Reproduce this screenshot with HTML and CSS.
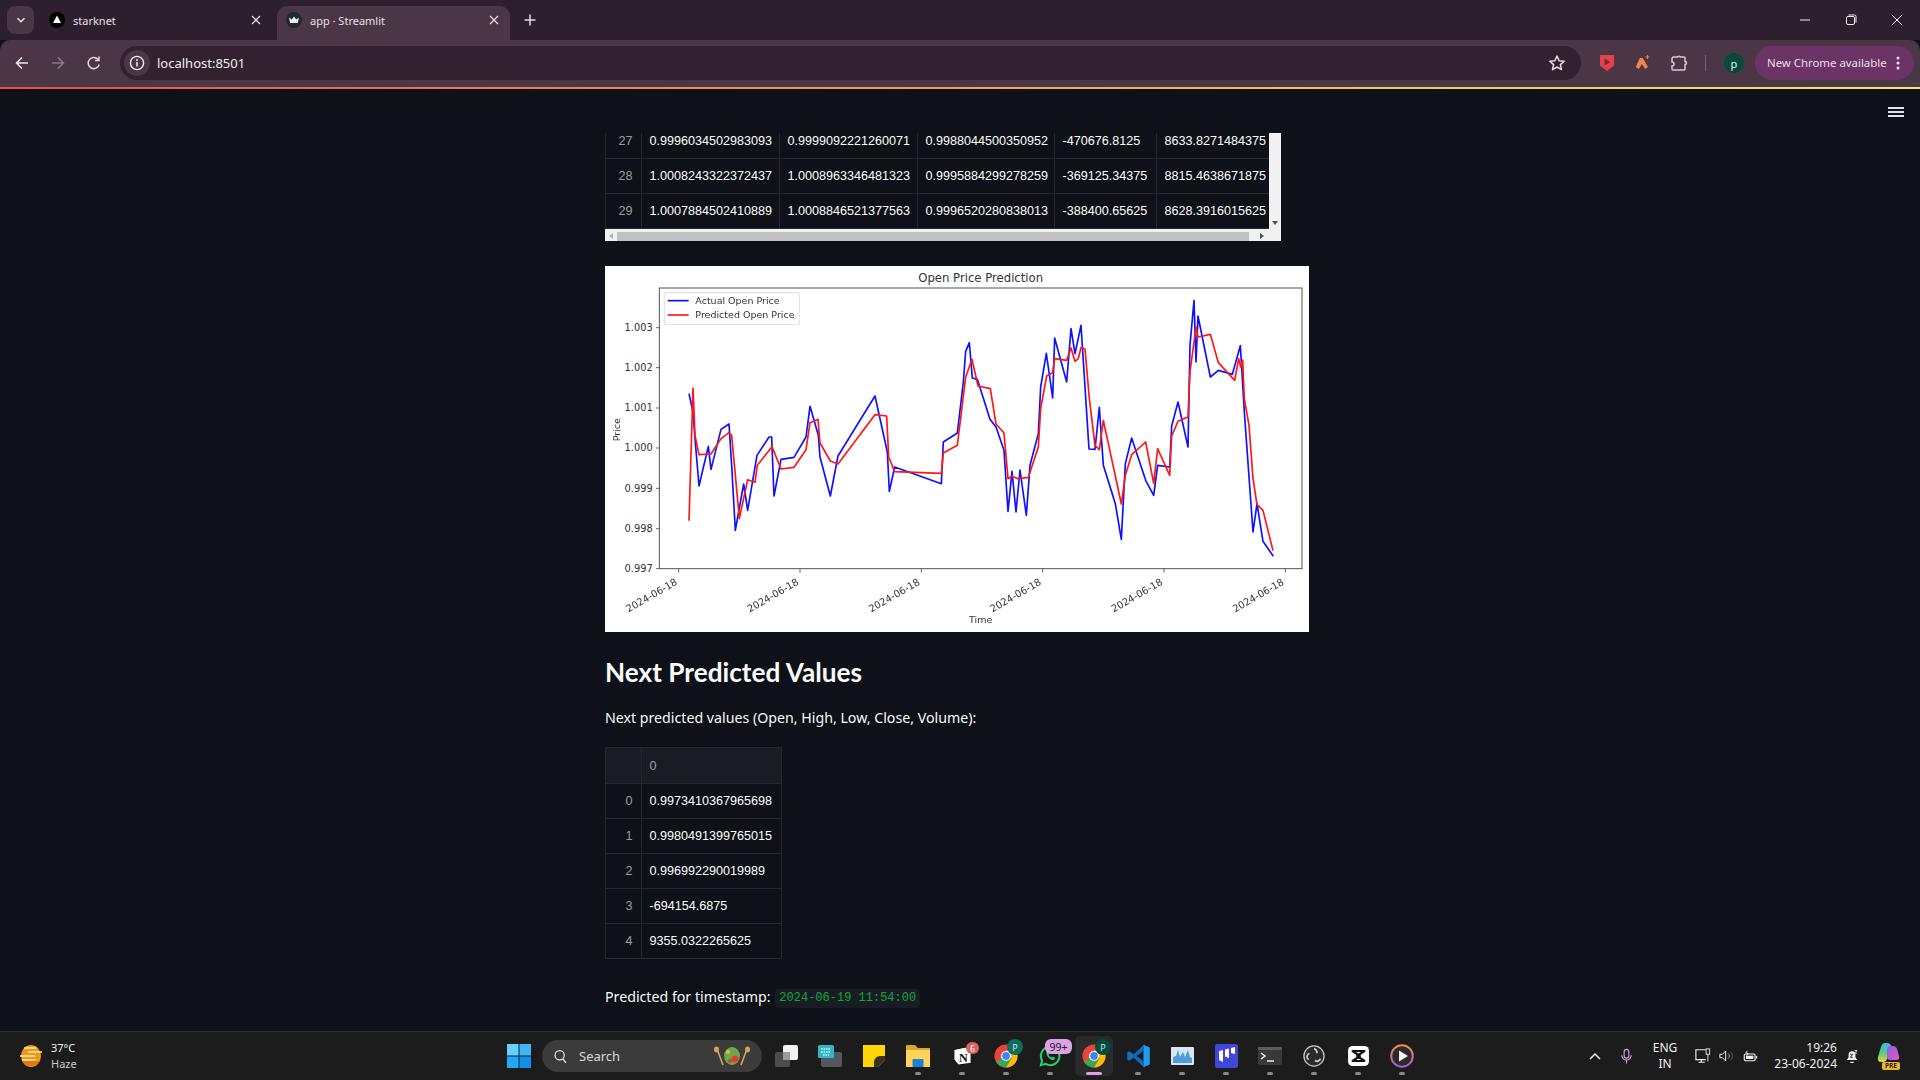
FILE: index.html
```html
<!DOCTYPE html>
<html lang="en">
<head>
<meta charset="utf-8">
<title>app · Streamlit</title>
<link rel="stylesheet" href="styles.css">
</head>
<body>
<div class="window">
  <header class="tabstrip">
    <button class="tabsearch"><svg width="12" height="12" viewBox="0 0 12 12"><path d="M2.500 4.200 6 7.700l3.500-3.500" fill="none" stroke="#e8dfe6" stroke-width="1.600"/></svg></button>
    <div class="tab tab-idle">
      <svg class="favicon" width="16" height="16" viewBox="0 0 16 16"><circle cx="8" cy="8" r="8" fill="#000"/><path d="M8 3.600 12 11H4z" fill="#fff"/></svg>
      <span class="tabtitle">starknet</span>
      <svg class="tabclose" width="12" height="12" viewBox="0 0 12 12"><path d="M2 2l8 8M10 2l-8 8" stroke="#e6dde4" stroke-width="1.300"/></svg>
    </div>
    <div class="tab tab-active">
      <svg class="favicon" width="16" height="16" viewBox="0 0 16 16"><circle cx="8" cy="8" r="8" fill="#232730"/><path d="M3 5.500 5.800 7.500 8 4.500l2.200 3L13 5.500 11.800 11H4.200z" fill="#f2f0f2"/></svg>
      <span class="tabtitle">app · Streamlit</span>
      <svg class="tabclose" width="12" height="12" viewBox="0 0 12 12"><path d="M2 2l8 8M10 2l-8 8" stroke="#e6dde4" stroke-width="1.300"/></svg>
    </div>
    <svg class="newtab" width="14" height="14" viewBox="0 0 14 14"><path d="M7 1.500v11M1.500 7h11" stroke="#e6dde4" stroke-width="1.500"/></svg>
    <div class="wincontrols">
      <svg width="12" height="12" viewBox="0 0 12 12"><path d="M1 6h10" stroke="#f0f0f0" stroke-width="1"/></svg>
      <svg width="12" height="12" viewBox="0 0 12 12"><rect x="1.500" y="2.500" width="8" height="8" rx="1.500" fill="none" stroke="#f0f0f0"/><path d="M3.500 1h6a1.500 1.500 0 0 1 1.500 1.500v6" fill="none" stroke="#f0f0f0"/></svg>
      <svg width="12" height="12" viewBox="0 0 12 12"><path d="M.8.8l10.400 10.400M11.200.8.800 11.200" stroke="#f0f0f0"/></svg>
    </div>
  </header>

  <nav class="toolbar">
    <svg class="navicon" width="16" height="16" viewBox="0 0 16 16"><path d="M14 8H2.500M8 2.500 2.500 8 8 13.500" fill="none" stroke="#eee5ec" stroke-width="1.600"/></svg>
    <svg class="navicon" width="16" height="16" viewBox="0 0 16 16"><path d="M2 8h11.500M8 2.500 13.500 8 8 13.500" fill="none" stroke="#8b7886" stroke-width="1.600"/></svg>
    <svg class="navicon" width="16" height="16" viewBox="0 0 16 16"><path d="M13.200 9.500A5.600 5.600 0 1 1 12 4.300M13 1.500v4H9" fill="none" stroke="#e3dae1" stroke-width="1.500"/></svg>
    <div class="omnibox">
      <span class="siteinfo"><svg width="16" height="16" viewBox="0 0 16 16"><circle cx="8" cy="8" r="6.600" fill="none" stroke="#efe8ee" stroke-width="1.400"/><path d="M8 7v4.500" stroke="#efe8ee" stroke-width="1.600"/><circle cx="8" cy="4.900" r="1" fill="#efe8ee"/></svg></span>
      <span class="url">localhost:8501</span>
      <svg class="star" width="18" height="18" viewBox="0 0 18 18"><path d="m9 2 2.100 4.700 5.100.5-3.800 3.400 1.100 5L9 13l-4.500 2.600 1.100-5-3.800-3.400 5.100-.5z" fill="none" stroke="#e6dde4" stroke-width="1.500" stroke-linejoin="round"/></svg>
    </div>
    <svg class="ext ext-pocket" width="14" height="16" viewBox="0 0 14 16"><path d="M0 0h14v10.500L7 16l-7-5.500z" fill="#e8404a"/><path d="M4.500 3.500 10.500 7l-6 3.500z" fill="#6e2b3c"/></svg>
    <svg class="ext ext-spark" width="18" height="18" viewBox="0 0 18 18"><path d="M6.800 4h3L15 13l-3 2-3-5-3.200 5-3-2z" fill="#f5824a"/><path d="M14.500 1v4M12.500 3h4" stroke="#f5824a" stroke-width="1"/></svg>
    <svg class="ext ext-puzzle" width="18" height="18" viewBox="0 0 18 18"><path d="M4 3h3.500a2 2 0 0 1 3 0H14a1 1 0 0 1 1 1v3.500a1.500 1.500 0 0 1 0 3V15a1 1 0 0 1-1 1H3a1 1 0 0 1-1-1v-3a2 2 0 0 0 0-4V5a2 2 0 0 1 2-2z" fill="none" stroke="#d8c9d4" stroke-width="1.500"/></svg>
    <span class="tooldivider"></span>
    <span class="avatar">p</span>
    <div class="updatechip"><span class="chiptext">New Chrome available</span><svg width="4" height="14" viewBox="0 0 4 14"><circle cx="2" cy="2" r="1.500" fill="#eadfe8"/><circle cx="2" cy="7" r="1.500" fill="#eadfe8"/><circle cx="2" cy="12" r="1.500" fill="#eadfe8"/></svg></div>
  </nav>
  <div class="accentline"></div>

  <main class="content">
    <div class="hamburger"><span></span><span></span><span></span></div>
    <div class="column">
      <div class="scrollframe">
        <div class="scrollbody">
          <table class="dtable wide">
            <colgroup><col class="c-idx"><col class="c-a"><col class="c-b"><col class="c-c"><col class="c-d"><col class="c-e"></colgroup>
            <tr><th>27</th><td>0.9996034502983093</td><td>0.9999092221260071</td><td>0.9988044500350952</td><td>-470676.8125</td><td>8633.8271484375</td></tr>
            <tr><th>28</th><td>1.0008243322372437</td><td>1.0008963346481323</td><td>0.9995884299278259</td><td>-369125.34375</td><td>8815.4638671875</td></tr>
            <tr><th>29</th><td>1.0007884502410889</td><td>1.0008846521377563</td><td>0.9996520280838013</td><td>-388400.65625</td><td>8628.3916015625</td></tr>
          </table>
          <div class="hscroll"><i class="arrow-l"></i><b class="thumb"></b><i class="arrow-r"></i></div>
        </div>
        <div class="vscroll"><i class="arrow-d"></i></div>
      </div>

      <svg class="chart" viewBox="15 2 2112 1098" preserveAspectRatio="none" role="img" aria-label="Open Price Prediction">
        <rect x="15" y="0" width="2112" height="1100" fill="#fff"/>
        <text class="c-title" x="1142" y="50" text-anchor="middle">Open Price Prediction</text>
        <polyline class="blue" points="267,385 279,440 285,520 297,662 325,543 333,612 363,492 387,476 395,600 406,795 431,656 443,735 471,570 507,515 515,515 522,692 543,582 582,576 618,515 630,423 655,510 660,575 691,692 714,572 825,392 862,560 868,678 884,605 1024,655 1030,530 1072,503 1090,350 1097,258 1108,232 1117,338 1132,342 1170,462 1188,485 1212,555 1224,738 1236,618 1248,740 1260,614 1279,750 1290,600 1315,505 1322,365 1339,264 1358,398 1364,218 1400,350 1413,190 1425,265 1443,180 1467,551 1485,552 1498,426 1510,600 1546,715 1564,822 1576,595 1595,518 1637,645 1661,690 1673,600 1709,605 1715,482 1734,410 1764,545 1770,240 1782,105 1788,290 1794,152 1831,335 1855,315 1897,327 1921,241 1933,440 1959,800 1971,715 1989,828 2020,873"/>
        <polyline class="red" points="267,766 279,368 285,510 297,568 333,566 363,520 387,502 395,510 418,760 443,643 465,651 472,600 516,544 543,611 582,606 618,553 630,472 654,462 660,533 691,587 714,596 825,448 860,452 866,575 884,619 1024,624 1030,563 1072,540 1097,335 1116,282 1134,362 1171,370 1188,476 1212,503 1224,640 1236,633 1254,640 1285,636 1315,545 1322,430 1340,332 1358,322 1364,280 1400,285 1413,248 1425,288 1435,280 1443,247 1455,251 1468,400 1485,540 1498,553 1510,465 1564,716 1576,630 1595,568 1637,530 1661,654 1673,550 1709,630 1715,512 1734,468 1764,455 1770,320 1788,185 1794,215 1831,207 1855,292 1904,345 1916,280 1922,305 1928,284 1933,400 1947,480 1959,640 1971,718 1989,735 2019,856"/>
        <rect class="frame" x="178" y="68" width="1928" height="842"/>
        <path class="tick" d="M168 187h10M168 307h10M168 428h10M168 548h10M168 669h10M168 790h10M168 910h10M236 910v12M600 910v12M964 910v12M1328 910v12M1692 910v12M2056 910v12"/>
        <g class="c-tick" text-anchor="end">
          <text x="158" y="197">1.003</text><text x="158" y="317">1.002</text><text x="158" y="438">1.001</text><text x="158" y="558">1.000</text><text x="158" y="679">0.999</text><text x="158" y="800">0.998</text><text x="158" y="920">0.997</text>
          <text x="234" y="956" transform="rotate(-30 234 956)">2024-06-18</text>
          <text x="598" y="956" transform="rotate(-30 598 956)">2024-06-18</text>
          <text x="962" y="956" transform="rotate(-30 962 956)">2024-06-18</text>
          <text x="1326" y="956" transform="rotate(-30 1326 956)">2024-06-18</text>
          <text x="1690" y="956" transform="rotate(-30 1690 956)">2024-06-18</text>
          <text x="2054" y="956" transform="rotate(-30 2054 956)">2024-06-18</text>
        </g>
        <text class="c-label" x="1142" y="1074" text-anchor="middle">Time</text>
        <text class="c-label" x="60" y="493" text-anchor="middle" transform="rotate(-90 60 493)">Price</text>
        <rect class="legend" x="193" y="82" width="405" height="96" rx="5"/>
        <path class="blue" d="M203 106h63"/>
        <path class="red" d="M203 149h63"/>
        <text class="c-label" x="286" y="116">Actual Open Price</text>
        <text class="c-label" x="286" y="159">Predicted Open Price</text>
      </svg>

      <h2 class="heading">Next Predicted Values</h2>
      <p class="para">Next predicted values (Open, High, Low, Close, Volume):</p>
      <table class="dtable narrow">
        <colgroup><col class="c-idx"><col class="c-val"></colgroup>
        <thead><tr><th></th><th class="colhead">0</th></tr></thead>
        <tbody>
          <tr><th>0</th><td>0.9973410367965698</td></tr>
          <tr><th>1</th><td>0.9980491399765015</td></tr>
          <tr><th>2</th><td>0.996992290019989</td></tr>
          <tr><th>3</th><td>-694154.6875</td></tr>
          <tr><th>4</th><td>9355.0322265625</td></tr>
        </tbody>
      </table>
      <p class="para stamp">Predicted for timestamp: <code class="chip">2024-06-19 11:54:00</code></p>
    </div>
  </main>

  <footer class="taskbar">
    <div class="weather">
      <svg width="24" height="22" viewBox="0 0 24 22"><ellipse cx="12" cy="11" rx="10" ry="11" fill="#f39a0c"/><path d="M12 21a10 10 0 0 0 9-5H3a10 10 0 0 0 9 5z" fill="#e8760c"/><path d="M5 3h12M9 7h14M1 11h15M3 15h14" stroke="#f6e7c8" stroke-width="1.300"/></svg>
      <div class="weathertext"><span>37°C</span><span class="dim">Haze</span></div>
    </div>
    <svg class="startlogo" width="24" height="24" viewBox="0 0 24 24"><rect width="11.500" height="11.500" fill="#66d0fb"/><rect x="12.500" width="11.500" height="11.500" fill="#3db7f8"/><rect y="12.500" width="11.500" height="11.500" fill="#22a7f5"/><rect x="12.500" y="12.500" width="11.500" height="11.500" fill="#0c92ee"/></svg>
    <div class="searchbox">
      <svg width="15" height="15" viewBox="0 0 16 18"><circle cx="7" cy="7.500" r="5.500" fill="none" stroke="#e5e5e5" stroke-width="1.500"/><path d="m11 12 3.500 4.500" stroke="#e5e5e5" stroke-width="1.500"/></svg>
      <span class="searchtext">Search</span>
      <svg class="salad" width="40" height="20" viewBox="0 0 40 20"><path d="M5 3l6 16M35 3l-6 16" stroke="#d8a05c" stroke-width="1.600"/><ellipse cx="4.500" cy="3.500" rx="2.500" ry="3" fill="#d8a05c"/><ellipse cx="35.500" cy="3.500" rx="2.500" ry="3" fill="#d8a05c"/><ellipse cx="20" cy="10" rx="8" ry="9" fill="#6aa84f"/><circle cx="23" cy="13" r="3.500" fill="#d9402f"/><circle cx="16" cy="6" r="2.200" fill="#e7b23c"/><circle cx="18" cy="15" r="2" fill="#d9402f"/></svg>
    </div>
    <div class="apps">
      <div class="app">
        <svg width="23" height="22" viewBox="0 0 23 22"><rect x="0" y="7" width="15" height="15" rx="2" fill="#4c4c4c"/><rect x="8" y="0" width="15" height="15" rx="2" fill="#f2f2f2"/><rect x="8" y="7" width="7" height="8" fill="#9b9b9b"/></svg>
      </div>
      <div class="app">
        <svg width="24" height="22" viewBox="0 0 24 22"><rect x="3" y="7" width="21" height="15" rx="2" fill="#55585b"/><rect x="0" y="0" width="16" height="13" rx="1.500" fill="#31b7c9"/><path d="M3 4h10M3 7h10M5 10h6" stroke="#dff6f9" stroke-width="1.400" stroke-dasharray="1.500 1"/></svg>
      </div>
      <div class="app">
        <svg width="22" height="22" viewBox="0 0 22 22"><path d="M0 0h22v15l-7 7H0z" fill="#ffd400"/><path d="M22 11v4l-7 7h-4v-5a6 6 0 0 1 6-6z" fill="#3a3320"/></svg>
      </div>
      <div class="app has-dot">
        <svg width="24" height="22" viewBox="0 0 24 22"><path d="M0 1a1 1 0 0 1 1-1h8l3 3h12v19H0z" fill="#e0a526"/><rect x="0" y="5" width="24" height="17" rx="1" fill="#ffd35c"/><rect x="6.500" y="14" width="11" height="8" rx="1" fill="#1a82d2"/></svg>
      </div>
      <div class="app has-dot">
        <svg width="21" height="20" viewBox="0 0 24 23"><path d="M2 4l14-3 6 4v15l-15 2-5-6z" fill="#fff" stroke="#111" stroke-width="1.400"/><text class="notion" x="13" y="18" text-anchor="middle">N</text></svg>
        <span class="badge badge-red">6</span>
      </div>
      <div class="app has-dot">
        <svg width="24" height="24" viewBox="0 0 26 26"><circle cx="13" cy="13" r="12.500" fill="#e8453a"/><path d="M13 13 2.200 19.300A12.500 12.500 0 0 0 13 25.500l6-10z" fill="#34a853"/><path d="M13 7h11A12.500 12.500 0 0 1 13 25.500l6-10z" fill="#fbbc05"/><circle cx="13" cy="13" r="5.500" fill="#fff"/><circle cx="13" cy="13" r="4.200" fill="#3f85f4"/></svg>
        <span class="badge badge-profile badge-lite">P</span>
      </div>
      <div class="app has-dot">
        <svg width="24" height="22" viewBox="0 0 24 24"><path d="M12 2a10 10 0 0 0-8.600 15L2 22l5.200-1.400A10 10 0 1 0 12 2z" fill="none" stroke="#25d366" stroke-width="2.200"/><path d="M8 7.500c0 5 3.500 8.500 8.500 9l1-2.500-3-1.500-1 1c-1.500-.5-2.500-1.500-3-3l1-1-1.500-3z" fill="#25d366"/></svg>
        <span class="badge badge-lilac">99+</span>
      </div>
      <div class="app app-active">
        <svg width="24" height="24" viewBox="0 0 26 26"><circle cx="13" cy="13" r="12.500" fill="#e8453a"/><path d="M13 13 2.200 19.300A12.500 12.500 0 0 0 13 25.500l6-10z" fill="#34a853"/><path d="M13 7h11A12.500 12.500 0 0 1 13 25.500l6-10z" fill="#fbbc05"/><circle cx="13" cy="13" r="5.500" fill="#fff"/><circle cx="13" cy="13" r="4.200" fill="#3f85f4"/></svg>
        <span class="badge badge-profile">P</span>
      </div>
      <div class="app has-dot">
        <svg width="25" height="24" viewBox="0 0 100 100"><path d="M71 3 30 44 12 30 3 35v30l9 5 18-14 41 41z" fill="#0a6fbd"/><path d="M71 28 41 50l30 22z" fill="#1c1c1c"/><path d="M71 3l26 12v70L71 97z" fill="#1f9cf0"/></svg>
      </div>
      <div class="app has-dot">
        <svg width="23" height="18" viewBox="0 0 23 18"><rect width="23" height="18" rx="1" fill="#d9e6ef"/><path d="M2 16V10l3-1 2-6 2 7 3-5 2 5 3-7 2 7 2 1v5z" fill="#4e9dd8"/></svg>
      </div>
      <div class="app has-dot">
        <svg width="23" height="24" viewBox="0 0 23 24"><rect width="23" height="24" rx="2" fill="#3f46d9"/><path d="M4 7l4-1v12l-4-2zM10 5.500l4-1V14l-4-1.500zM16 4l4-1v7l-4-1z" fill="#fff"/></svg>
      </div>
      <div class="app has-dot">
        <svg width="24" height="18" viewBox="0 0 24 18"><rect width="24" height="18" rx="2" fill="#38393a"/><rect width="24" height="3" rx="1" fill="#5b5b5c"/><path d="M3 6l4 3-4 3" fill="none" stroke="#eee" stroke-width="1.500"/><path d="M9 14h7" stroke="#eee" stroke-width="1.500"/></svg>
      </div>
      <div class="app has-dot">
        <svg width="22" height="22" viewBox="0 0 24 24"><circle cx="12" cy="12" r="11" fill="#2a2a2a" stroke="#c9c9c9" stroke-width="1.400"/><path d="M12 4a4 4 0 0 1 3 5M19 15a4 4 0 0 1-6 2M6 16a4 4 0 0 1 1-7" fill="none" stroke="#c9c9c9" stroke-width="2"/></svg>
      </div>
      <div class="app has-dot">
        <svg width="21" height="20" viewBox="0 0 23 22"><rect width="23" height="22" rx="5" fill="#fff"/><path d="M5 5.500h13l-8 5.500 8 5.500H5l8-5.500z" fill="none" stroke="#111" stroke-width="2.400" stroke-linejoin="round"/></svg>
      </div>
      <div class="app has-dot">
        <svg width="24" height="24" viewBox="0 0 24 24"><defs><linearGradient id="ring" x1="0" y1="0" x2="0" y2="1"><stop offset="0" stop-color="#f28b4a"/><stop offset="1" stop-color="#a85ad8"/></linearGradient></defs><circle cx="12" cy="12" r="10.800" fill="#2a2a2a" stroke="url(#ring)" stroke-width="2"/><path d="M9 6.500 18 12l-9 5.500z" fill="#f2f2f2"/></svg>
      </div>
    </div>
    <div class="tray">
      <svg width="12" height="8" viewBox="0 0 12 8"><path d="M1 7l5-5 5 5" fill="none" stroke="#eee" stroke-width="1.500"/></svg>
      <svg class="mic" width="11" height="17" viewBox="0 0 14 20"><rect x="4" y="1" width="6" height="11" rx="3" fill="none" stroke="#d29ade" stroke-width="1.500"/><path d="M1 8.500a6 6 0 0 0 12 0M7 15v4" fill="none" stroke="#d29ade" stroke-width="1.500"/></svg>
      <div class="lang"><span>ENG</span><span>IN</span></div>
      <svg class="net" width="16" height="16" viewBox="0 0 18 18"><path d="M12 2H1v11h11M4 16h7M7 13v3" fill="none" stroke="#f0f0f0" stroke-width="1.300"/><rect x="12.500" y="1" width="4" height="6" fill="none" stroke="#f0f0f0"/><path d="M14.500 7v8" stroke="#f0f0f0"/></svg>
      <svg class="vol" width="15" height="12" viewBox="0 0 18 14"><path d="M1 5h3l4-4v12l-4-4H1z" fill="none" stroke="#eee" stroke-width="1.200"/><path d="M11 4a4 4 0 0 1 0 6" fill="none" stroke="#bbb"/><path d="M14 2a7 7 0 0 1 0 10" fill="none" stroke="#666"/></svg>
      <svg class="batt" width="15" height="13" viewBox="0 0 18 14"><rect x="1.500" y="4" width="13" height="8" rx="1.500" fill="none" stroke="#f0f0f0" stroke-width="1.300"/><rect x="3.500" y="6" width="9" height="4" fill="#f0f0f0"/><rect x="15.500" y="6.500" width="1.500" height="3" fill="#f0f0f0"/><path d="M5 0 3.500 3H6L4.500 6" stroke="#f0f0f0" fill="none"/></svg>
      <div class="clock"><span>19:26</span><span>23-06-2024</span></div>
      <svg class="bell" width="12" height="15" viewBox="0 0 14 16"><path d="M7 2a4 4 0 0 0-4 4v3l-2 3h12l-2-3V6a4 4 0 0 0-4-4zM5 14h4v1.500H5z" fill="#f0f0f0"/><path d="M5 5.500h3L5 9h3" fill="none" stroke="#1c1c1c"/><path d="M10 1h3l-3 3h3" fill="none" stroke="#f0f0f0"/></svg>
      <div class="copilot">
        <svg width="23" height="20" viewBox="0 0 23 20"><defs><linearGradient id="copl" x1="0" y1="0" x2="0" y2="1"><stop offset="0" stop-color="#35b8ef"/><stop offset=".55" stop-color="#55d07a"/><stop offset="1" stop-color="#f0d040"/></linearGradient><linearGradient id="copr" x1="0" y1="0" x2="1" y2="1"><stop offset="0" stop-color="#8a5cf0"/><stop offset="1" stop-color="#e25bb4"/></linearGradient></defs><path d="M15 5q-1-5-5-5H8Q5 0 4 4L1 14q-1 5 3 5h3q2 0 3-3z" fill="url(#copl)"/><path d="M10 6q1-3 3-3h3q3 0 4 3l2 7q1 4-3 4h-6q-3 0-3-3z" fill="url(#copr)"/></svg>
        <span class="pre">PRE</span>
      </div>
    </div>
  </footer>
</div>
</body>
</html>
```

FILE: styles.css
```css
* { box-sizing: border-box; }
html, body { margin: 0; height: 100%; overflow: hidden; background: #0e1117; }
body { font-family: "Noto Sans", "Open Sans", sans-serif; }
svg { display: block; flex: none; }
.window { display: flex; flex-direction: column; height: 1080px; }

/* tab strip */
.tabstrip { height: 40px; flex: none; background: #2e1f2e; display: flex; align-items: flex-end; padding-left: 7px; color: #e8e0e6; }
.tabsearch { width: 27px; height: 28px; margin-bottom: 6px; padding: 0; border: 0; border-radius: 8px; background: #4b3646; display: flex; align-items: center; justify-content: center; }
.tab { width: 232px; height: 34px; display: flex; align-items: center; padding: 0 10px 6px 15px; gap: 8px; font-size: 11px; }
.tab-idle { padding-right: 4px; }
.tab-active { width: 233px; background: #4b3646; border-radius: 10px 10px 0 0; margin-left: 11px; padding-left: 9px; }
.tabtitle { flex: 1; white-space: nowrap; }
.newtab { margin: 0 0 13px 13px; }
.wincontrols { margin-left: auto; height: 40px; display: flex; align-items: center; gap: 34px; padding-right: 17px; }

/* toolbar */
.toolbar { height: 47px; flex: none; background: #4b3646; border-radius: 10px 10px 0 0; display: flex; align-items: center; padding: 0 6px 1px 14px; }
.navicon { margin-right: 20px; }
.omnibox { width: 1461px; height: 34px; margin-left: -2px; border-radius: 17px; background: #33212f; display: flex; align-items: center; padding: 0 15px 0 4px; }
.siteinfo { width: 26px; height: 26px; border-radius: 50%; background: #4b3646; display: flex; align-items: center; justify-content: center; }
.url { flex: 1; margin-left: 7px; font-size: 13px; color: #f2edf1; }
.ext-pocket { margin-left: 19px; }
.ext-spark { margin-left: 19px; }
.ext-puzzle { margin-left: 19px; }
.tooldivider { width: 1px; height: 16px; background: #77626f; margin: 0 17px 0 17px; }
.avatar { width: 20px; height: 20px; border-radius: 50%; background: #03493d; color: #e9f0ee; font-size: 11px; display: flex; align-items: center; justify-content: center; margin-left: 1px; }
.updatechip { margin-left: 11px; width: 159px; height: 34px; border-radius: 17px; background: #6c3466; color: #eedfea; font-size: 11.4px; display: flex; align-items: center; justify-content: space-between; padding: 0 14px 0 12px; white-space: nowrap; }
.chiptext { margin-top: -2px; }
.accentline { height: 2px; flex: none; background: linear-gradient(90deg, #ea4a4a 0%, #f08a4e 35%, #f6c25c 70%, #f8e36b 100%); }

/* streamlit content */
.content { flex: 1; min-height: 0; position: relative; overflow: hidden; background: #0e1117; color: #fafafa; padding-top: 44px; }
.hamburger { position: absolute; top: 18px; right: 16px; width: 16px; display: flex; flex-direction: column; gap: 2px; }
.hamburger span { height: 2px; background: #dfe2e8; }
.column { width: 704px; margin-left: 605px; display: flex; flex-direction: column; align-items: flex-start; }

.scrollframe { width: 676px; height: 108px; display: flex; overflow: hidden; background: #f1f1f1; }
.scrollbody { width: 664px; display: flex; flex-direction: column; overflow: hidden; background: #f1f1f1; }
.dtable { border-collapse: collapse; table-layout: fixed; font-family: "Liberation Sans", Arial, sans-serif; font-size: 12.6px; color: #fff; background: #0e1117; }
.dtable th, .dtable td { height: 35px; padding: 0 7.5px; border: 1px solid #26282e; white-space: nowrap; overflow: hidden; font-weight: 400; }
.dtable th { text-align: right; color: rgba(250, 250, 250, .6); padding-right: 8.5px; }
.dtable td { text-align: left; }
.wide { width: 664px; margin-top: -10px; margin-bottom: 2px; flex: none; }
.narrow { width: 176px; margin-top: 17px; margin-bottom: 26px; }
.c-idx { width: 36px; }
.c-a { width: 138px; }
.c-b { width: 138px; }
.c-c { width: 137px; }
.c-d { width: 102px; }
.c-e { width: 113px; }
.c-val { width: 140px; }
.narrow thead th { background: #1a1c24; height: 36px; }
.narrow .colhead { text-align: left; }

.hscroll { height: 11px; display: flex; align-items: center; padding: 0 2px 0 4px; }
.thumb { width: 632px; height: 9px; background: #c1c1c1; margin-left: 4px; }
.arrow-l { width: 0; height: 0; border: 3px solid transparent; border-left: 0; border-right: 4px solid #b0b0b0; }
.arrow-r { width: 0; height: 0; margin-left: 11px; border: 3px solid transparent; border-right: 0; border-left: 4px solid #505050; }
.vscroll { width: 12px; display: flex; flex-direction: column; align-items: center; padding-top: 88px; background: #f1f1f1; }
.arrow-d { width: 0; height: 0; border: 3px solid transparent; border-bottom: 0; border-top: 4px solid #505050; }

.chart { width: 704px; height: 366px; margin-top: 25px; filter: blur(.4px); }
.blue { fill: none; stroke: #1010ff; stroke-width: 5; stroke-linejoin: round; }
.red { fill: none; stroke: #ff1616; stroke-width: 5; stroke-linejoin: round; }
.frame { fill: none; stroke: #555; stroke-width: 3; }
.tick { stroke: #444; stroke-width: 2.4; fill: none; }
.legend { fill: none; stroke: #d6d6d6; stroke-width: 2.4; }
.c-title { font: 35px "DejaVu Sans", sans-serif; fill: #333; }
.c-label { font: 28.5px "DejaVu Sans", sans-serif; fill: #333; }
.c-tick text { font: 29.5px "DejaVu Sans", sans-serif; fill: #333; }

.heading { margin: 19px 0 0; height: 42px; font-family: Lato, "Noto Sans", sans-serif; font-size: 26.2px; line-height: 42px; font-weight: 700; color: #fafafa; white-space: nowrap; }
.para { margin: 13px 0 0; height: 24px; font-size: 14.2px; line-height: 24px; color: #fafafa; white-space: nowrap; }
.stamp { margin: 0; }
.chip { display: inline-block; margin-left: 1px; padding: 0 4px; height: 19px; line-height: 19px; border-radius: 4px; background: #1a1c24; color: #09ab3b; font-family: "Liberation Mono", monospace; font-size: 12px; vertical-align: 1px; }

/* taskbar */
.taskbar { height: 49px; flex: none; background: #1c1c1c; border-top: 1px solid #2e2f32; display: flex; align-items: center; color: #f0f0f0; font-size: 11px; }
.weather { width: 507px; padding-left: 19px; display: flex; align-items: center; gap: 8px; flex: none; }
.weathertext { display: flex; flex-direction: column; line-height: 16px; }
.dim { color: #c8c8c8; }
.searchbox { width: 220px; height: 32px; margin-left: 11px; border-radius: 16px; background: #3b3b3b; display: flex; align-items: center; padding: 0 10px 0 11px; }
.searchtext { flex: 1; margin-left: 11px; font-size: 13px; color: #d8d8d8; }
.apps { display: flex; margin-left: 2px; }
.app { width: 44px; height: 40px; display: flex; align-items: center; justify-content: center; position: relative; }
.app.has-dot::after, .app-active::after { content: ""; position: absolute; left: 19px; bottom: 1px; width: 6px; height: 3px; border-radius: 2px; background: #8a8a8a; }
.app-active { width: 38px; margin: 0 3px; background: #2a2a2a; border-radius: 5px; }
.app-active::after { left: 11px; width: 16px; background: #d9a0e2; }
.badge { position: absolute; display: flex; align-items: center; justify-content: center; font-size: 9px; }
.badge-red { top: 6px; right: 5px; width: 13px; height: 12px; border-radius: 6px; background: #d9605c; color: #fff; }
.badge-profile { top: 3px; right: 2px; width: 16px; height: 16px; border-radius: 50%; background: #03493d; color: #d5e3df; }
.badge-lite { right: 5px; background: #0b6e5f; }
.badge-lilac { top: 3px; right: 0; width: 27px; height: 15px; border-radius: 6px; background: #dba3e4; color: #1c1c1c; font-size: 10.5px; }
.tray { margin-left: auto; display: flex; align-items: center; padding-right: 20px; }
.mic { margin-left: 20px; }
.lang { display: flex; flex-direction: column; align-items: center; width: 34px; margin-left: 16px; line-height: 16px; font-size: 12px; }
.net { margin-left: 13px; }
.vol { margin-left: 8px; }
.batt { margin-left: 9px; }
.clock { width: 78px; margin-left: 1px; display: flex; flex-direction: column; align-items: flex-end; line-height: 16px; font-size: 12px; }
.bell { margin-left: 9px; }
.copilot { margin-left: 19px; position: relative; width: 23px; height: 26px; }
.pre { position: absolute; right: 0; bottom: -1px; width: 18px; height: 8px; text-align: center; border-radius: 2px; background: #f0b429; color: #1c1c1c; font-size: 6.5px; line-height: 8px; font-weight: 700; }
.notion { font: 700 14px "Liberation Serif", serif; fill: #111; }
```
